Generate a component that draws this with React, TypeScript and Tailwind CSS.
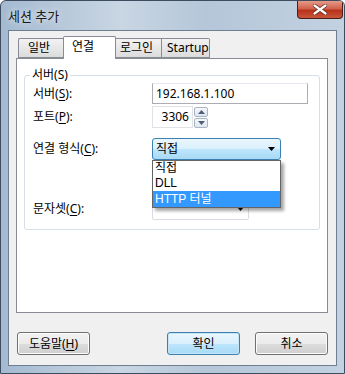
import React from "react";

const font = { fontFamily: '"Noto Sans", "Noto Sans CJK KR", sans-serif' };

function U({ c }: { c: string }) {
  return <span className="underline underline-offset-2">{c}</span>;
}

function Arrow() {
  return (
    <svg width="7" height="4" viewBox="0 0 7 4">
      <path d="M0 0h7L3.5 4z" fill="#000" />
    </svg>
  );
}

function SpinBtn({ up }: { up?: boolean }) {
  return (
    <div className="h-[10px] w-[14px] flex items-center justify-center rounded-[2px] border border-[#aab4c2] bg-[linear-gradient(#f6f8fb,#dfe6ef)]">
      <svg width="7" height="4" viewBox="0 0 7 4">
        <path d={up ? "M0 4h7L3.5 0z" : "M0 0h7L3.5 4z"} fill="#4b5d7a" />
      </svg>
    </div>
  );
}

function Btn({ children, focus }: { children: React.ReactNode; focus?: boolean }) {
  return (
    <div
      className={
        "w-[73px] h-[23px] rounded-[3px] border flex items-center justify-center text-[12px] text-black " +
        (focus
          ? "border-[#3c7fb1] bg-[linear-gradient(#eaf6fd_0%,#d9f0fc_50%,#bee6fd_51%,#a7d9f5_100%)] shadow-[inset_0_0_0_1px_#c4e5f6]"
          : "border-[#707070] bg-[linear-gradient(#f2f2f2_0%,#ebebeb_50%,#dddddd_51%,#cfcfcf_100%)] shadow-[inset_0_0_0_1px_#fcfcfc]")
      }
    >
      {children}
    </div>
  );
}

export default function App() {
  return (
    <div
      style={font}
      className="w-[345px] h-[374px] flex flex-col rounded-t-[6px] border border-[#3d4d5f] bg-[linear-gradient(90deg,#a4bad1_0%,#c9d6e3_35%,#b4c6d9_60%,#c3d2e1_100%)] overflow-hidden"
    >
      {/* Title bar */}
      <div className="h-[29px] flex items-start justify-between pl-[7px]">
        <span className="mt-[6px] text-[13px] text-[#1a1a1a] [text-shadow:0_0_6px_#ffffff]">세션 추가</span>
        <div className="mr-[1px] w-[46px] h-[18px] rounded-b-[4px] border border-t-0 border-[#4a1f1a] bg-[linear-gradient(#e59a89_0%,#d0624c_45%,#b7321a_55%,#c9553a_100%)] flex items-center justify-center">
          <svg width="14" height="11" viewBox="0 0 14 11">
            <path d="M1.5 1.5L12.5 9.5M12.5 1.5L1.5 9.5" stroke="#5a2a22" strokeWidth="3.6" strokeLinecap="round" />
            <path d="M1.5 1.5L12.5 9.5M12.5 1.5L1.5 9.5" stroke="#ffffff" strokeWidth="2.2" strokeLinecap="round" />
          </svg>
        </div>
      </div>

      {/* Client area */}
      <div className="flex-1 mx-[7px] mb-[7px] border border-[#6e7f92] bg-[#f0f0f0] flex flex-col px-[7px] pt-[5px] text-[12px] text-black">
        {/* Tabs */}
        <div className="flex items-end h-[23px] pl-[2px] relative z-10">
          <div className="w-[46px] h-[20px] border border-[#898c95] border-r-0 rounded-tl-[2px] bg-[linear-gradient(#f2f2f2,#dcdcdc)] flex items-center pl-[9px] mb-[1px]">일반</div>
          <div className="w-[53px] h-[23px] border border-[#898c95] border-b-0 rounded-t-[2px] bg-white flex items-start pt-[1px] pl-[8px] -ml-[1px]">연결</div>
          <div className="w-[46px] h-[20px] border border-[#898c95] border-l-0 bg-[linear-gradient(#f2f2f2,#dcdcdc)] flex items-center pl-[4px] mb-[1px]">로그인</div>
          <div className="w-[48px] h-[20px] border border-[#898c95] border-l-0 rounded-tr-[2px] bg-[linear-gradient(#f2f2f2,#dcdcdc)] flex items-center pl-[5px] mb-[1px]">Startup</div>
        </div>

        {/* Panel */}
        <div className="-mt-[1px] w-[312px] h-[255px] border border-[#898c95] bg-white px-[7px] pt-[16px]">
          <fieldset className="relative h-[155px] border border-[#d5dfe5] rounded-[3px] pl-[8px] pt-[7px]">
            <div className="absolute -top-[9px] left-[5px] bg-white px-[2px] leading-[16px]">서버(S)</div>
            {/* Row server */}
            <div className="flex items-center h-[21px]">
              <div className="w-[119px]">서버(<U c="S" />):</div>
              <div className="w-[156px] h-[21px] border border-[#abadb3] border-t-[#e3e9ef] flex items-center pl-[3px]">192.168.1.100</div>
            </div>
            {/* Row port */}
            <div className="flex items-center h-[22px] mt-[2px]">
              <div className="w-[119px]">포트(<U c="P" />):</div>
              <div className="w-[41px] h-[22px] border border-[#dfe3e8] flex items-center justify-end pr-[3px]">3306</div>
              <div className="ml-[1px] flex flex-col gap-[1px]">
                <SpinBtn up />
                <SpinBtn />
              </div>
            </div>
            {/* Row connection type */}
            <div className="flex items-center h-[22px] mt-[10px]">
              <div className="w-[119px]">연결 형식(<U c="C" />):</div>
              <div className="relative">
                <div className="w-[129px] h-[22px] rounded-[3px] border border-[#3c7fb1] bg-[linear-gradient(#eaf6fd_0%,#d9f0fc_50%,#bee6fd_51%,#a7d9f5_100%)] flex items-center justify-between pl-[3px] pr-[5px]">
                  <span>직접</span>
                  <Arrow />
                </div>
                {/* Dropdown list */}
                <div className="absolute left-0 top-[22px] z-20 w-[129px] h-[48px] border border-[#646464] bg-white shadow-[3px_3px_3px_rgba(0,0,0,0.35)] flex flex-col text-[12px] font-['Liberation_Sans','Noto_Sans_CJK_KR',sans-serif]">
                  <div className="h-[15px] leading-[15px] pl-[2px]">직접</div>
                  <div className="h-[15px] leading-[15px] pl-[2px]">DLL</div>
                  <div className="h-[16px] leading-[16px] pl-[2px] bg-[#3399ff] text-white">HTTP 터널</div>
                </div>
              </div>
            </div>
            {/* Row charset */}
            <div className="flex items-center h-[22px] mt-[38px]">
              <div className="w-[119px]">문자셋(<U c="C" />):</div>
              <div className="w-[97px] h-[22px] rounded-[2px] border border-[#d9dde3] flex items-center justify-end pr-[4px]">
                <Arrow />
              </div>
            </div>
          </fieldset>
        </div>

        {/* Buttons */}
        <div className="flex items-center mt-[19px] pl-[1px]">
          <Btn>
            도움말(<U c="H" />)
          </Btn>
          <div className="ml-[77px]">
            <Btn focus>확인</Btn>
          </div>
          <div className="ml-[15px]">
            <Btn>취소</Btn>
          </div>
        </div>
      </div>
    </div>
  );
}
